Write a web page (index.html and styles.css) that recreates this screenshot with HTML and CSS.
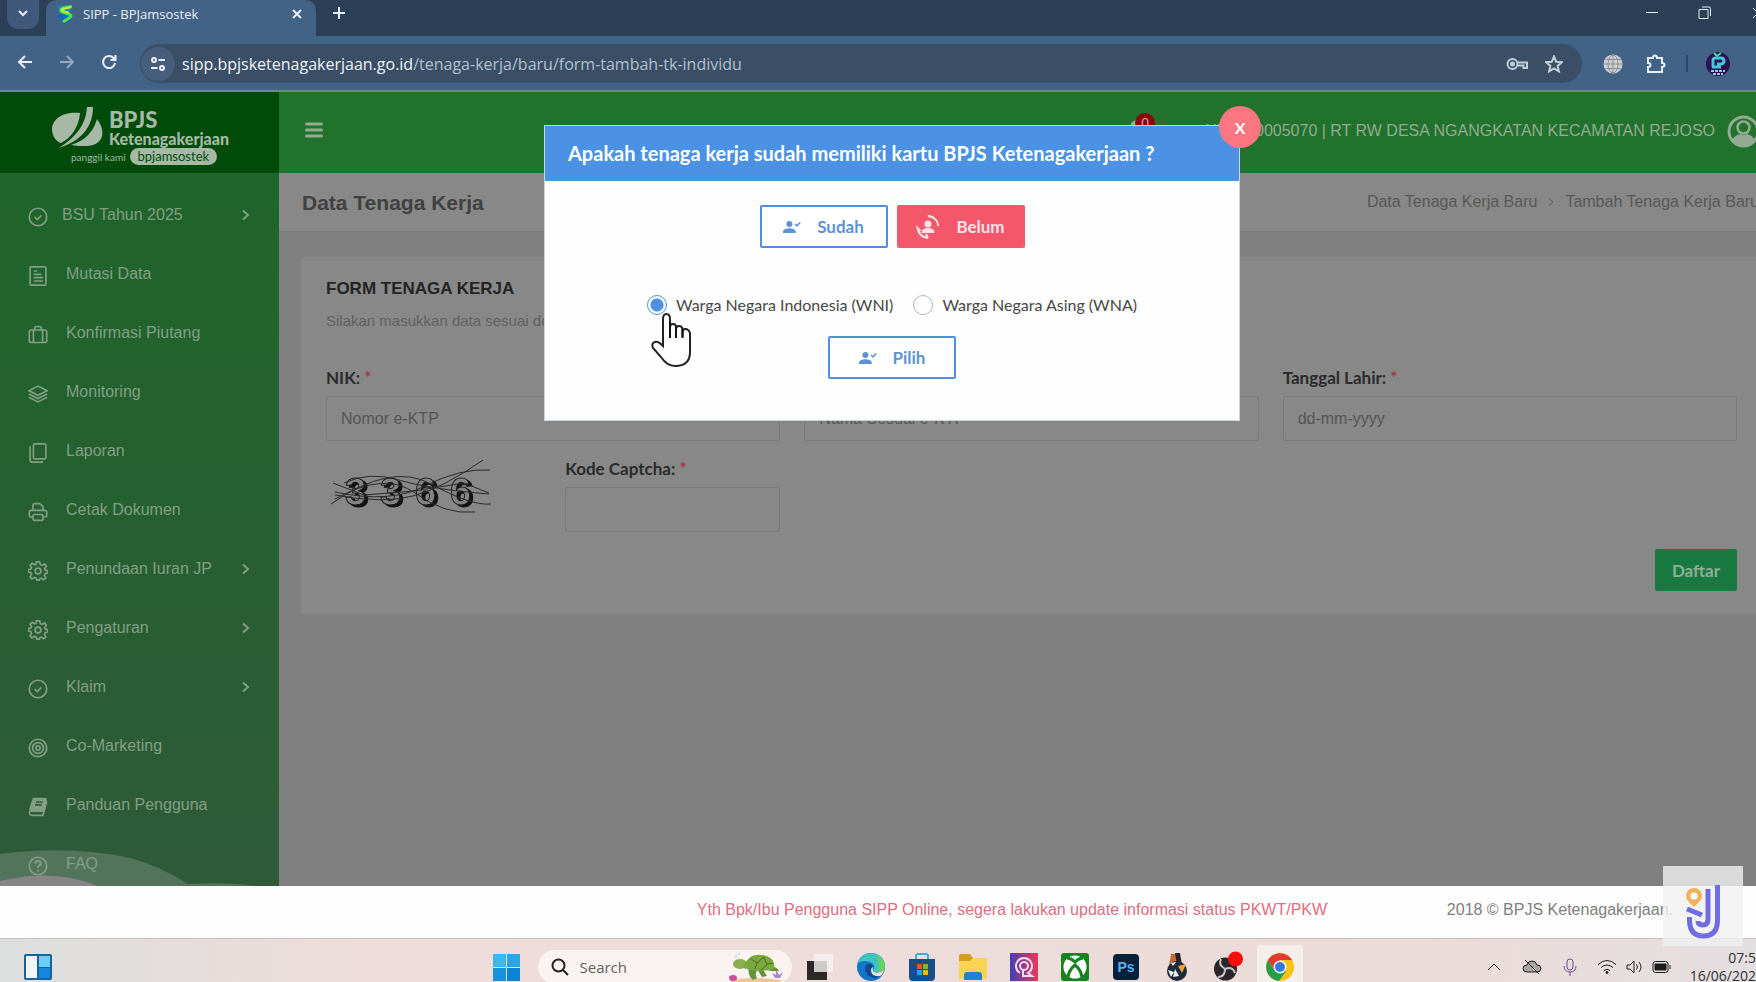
FILE: index.html
```
<!DOCTYPE html>
<html lang="id">
<head>
    <meta charset="UTF-8">
    <meta name="viewport" content="width=device-width, initial-scale=1.0">
    <title>SIPP - BPJamsostek</title>
    <link rel="stylesheet" href="styles.css">
</head>
<body>

<!-- shared icons -->
<svg class="defs" width="0" height="0">
    <symbol id="check-circle" viewBox="0 0 24 24"><circle cx="12" cy="12" r="10.5"/><path d="M8 12l3 3 5-5"/></symbol>
    <symbol id="gear" viewBox="0 0 24 24"><circle cx="12" cy="12" r="3.5"/><path d="M10 1h4l.8 3.500 2 .8L20 3.500 22 6l-2 3 .8 2 2.700.5v3l-3 .8-.8 2 1.800 3-2.500 2.200-3-1.800-2 .8L13.500 23h-3L9.700 20.500l-2-.8-3 1.800L2.500 19l1.800-3-.8-2L.5 13.300v-3L3.500 9.700l.8-2L2.500 5 5 2.700l3 1.800 1.500-.7z"/></symbol>
    <symbol id="chevron" viewBox="0 0 8 12"><path d="M1.500 1.500L6.500 6l-5 4.500"/></symbol>
    <symbol id="user-check" viewBox="0 0 24 18"><circle cx="8.500" cy="5" r="4" fill="currentColor"/><path d="M0 17v-2c0-3 5-4.500 8.500-4.500S17 12 17 15v2z" fill="currentColor"/><path d="M16 5l2.500 2.500L23 3" fill="none" stroke="currentColor" stroke-width="2"/></symbol>
</svg>

<div class="screen">

    <div class="tabstrip">
        <button class="tab-search" aria-label="Cari tab"><svg width="12" height="12" viewBox="0 0 12 12"><path d="M2 4l4 4 4-4"/></svg></button>
        <div class="tab">
            <svg class="favicon" width="18" height="18" viewBox="0 0 18 18"><path d="M2 1l9-1 5 3-5 6-8-2z" fill="#1684d8" stroke="none"/><path d="M1 11l8-3 7 2-1 6-9 1z" fill="#1368bd" stroke="none"/><path d="M16 1.500L7 3Q3 5 6 7l7 2q4 2 0 4l-6 4" fill="none" stroke="#4ee04a" stroke-width="3"/><path d="M15 2L7 4q-2 1 0 2l6 2" fill="none" stroke="#c3ee35"/></svg>
            <span class="tab-title">SIPP - BPJamsostek</span>
            <button class="tab-close" aria-label="Tutup tab"><svg width="10" height="10" viewBox="0 0 10 10"><path d="M1 1l8 8M9 1L1 9"/></svg></button>
        </div>
        <button class="new-tab" aria-label="Tab baru"><svg width="12" height="12" viewBox="0 0 12 12"><path d="M6 0v12M0 6h12"/></svg></button>
        <div class="window-buttons">
            <button aria-label="Minimize"><svg width="12" height="12" viewBox="0 0 12 12"><path d="M0 5.500h12"/></svg></button>
            <button aria-label="Restore"><svg width="14" height="14" viewBox="0 0 14 14"><path d="M1 3.500h9v9H1zM4 1h7q1.500 0 1.500 1.500V10"/></svg></button>
            <button aria-label="Close"><svg width="12" height="12" viewBox="0 0 12 12"><path d="M1 1l10 10M11 1L1 11"/></svg></button>
        </div>
    </div>

    <div class="toolbar">
        <button aria-label="Kembali"><svg width="16" height="16" viewBox="0 0 16 16"><path d="M15 8H2M8 2L2 8l6 6"/></svg></button>
        <button class="dim" aria-label="Maju"><svg width="16" height="16" viewBox="0 0 16 16"><path d="M1 8h13M8 2l6 6-6 6"/></svg></button>
        <button aria-label="Muat ulang"><svg width="16" height="16" viewBox="0 0 16 16"><path d="M14 9a6 6 0 1 1-1.500-5L14.500 6M14.500 1v5h-5"/></svg></button>
        <div class="address">
            <span class="site-info"><svg width="16" height="16" viewBox="0 0 16 16"><circle cx="4" cy="4" r="2"/><path d="M8.500 4H15M1 12h6.500"/><circle cx="12" cy="12" r="2"/></svg></span>
            <span class="url"><b>sipp.bpjsketenagakerjaan.go.id</b>/tenaga-kerja/baru/form-tambah-tk-individu</span>
            <svg class="key" width="22" height="14" viewBox="0 0 22 14"><circle cx="6.500" cy="7" r="5"/><circle cx="6.500" cy="7" r="1.500" fill="#c3cedb"/><path d="M11.500 5.500H21V11h-3.500V8.500H11.500"/></svg>
            <svg class="star" width="18" height="18" viewBox="0 0 18 18"><path d="M9 1.500l2.200 5.200 5.600.5-4.200 3.700 1.300 5.500L9 13.500l-4.900 2.900 1.300-5.500L1.200 7.200l5.600-.5z"/></svg>
        </div>
        <svg class="globe" width="20" height="20" viewBox="0 0 20 20"><circle cx="10" cy="10" r="9.500" fill="#cfd0d2" stroke="none"/><path d="M1 10h18M2.500 5.500h15M2.500 14.500h15M10 1v18" stroke="#878b92"/><ellipse cx="10" cy="10" rx="5" ry="9" stroke="#878b92"/></svg>
        <svg class="puzzle" width="20" height="20" viewBox="0 0 20 20"><path d="M2 4h5q0-2.500 2-2.500T11 4h5v5q2.500 0 2.500 2T16 13v5H2v-5q2.500 0 2.500-2T2 9z"/></svg>
        <span class="divider"></span>
        <svg class="avatar" width="24" height="24" viewBox="0 0 24 24"><circle cx="12" cy="12" r="12" fill="#2b1152" stroke="none"/><path d="M7 15V8q0-2 3-2h5q3 0 3 3t-4 3h-3M6 15h9" stroke="#45c6dc" stroke-width="3"/><path d="M8 1l3 3 4-3" stroke="#3fdc9c" stroke-width="2"/><path d="M5 19h14M7 22h10" stroke="#8ec4e6" stroke-width="2" stroke-dasharray="3 1"/></svg>
    </div>

    <div class="page">
        <div class="app">
            <aside class="sidebar">
                <div class="brand">
                    <div class="brand-main">
                        <svg width="52" height="41" viewBox="0 0 52 41"><path d="M29 6C14 4 1 11 1 22c0 8 5 13 9 14C20 31 28 20 29 6z"/><path d="M36 0h6c0 20-12 34-34 41 18-12 27-24 28-41z"/><path d="M46 12c10 13 6 27-11 27-5 0-10 0-15-1 13-4 22-12 26-26z"/></svg>
                        <div>
                            <div class="brand-name">BPJS</div>
                            <div class="brand-sub">Ketenagakerjaan</div>
                        </div>
                    </div>
                    <div class="brand-tag"><span>panggil kami</span> <b>bpjamsostek</b></div>
                </div>
                <nav class="menu">
                    <a href="#" class="first"><svg class="ico"><use href="#check-circle"/></svg><span>BSU Tahun 2025</span><svg class="arrow"><use href="#chevron"/></svg></a>
                    <a href="#"><svg class="ico" viewBox="0 0 24 24"><rect x="2.500" y="1" width="19" height="22" rx="1"/><path d="M7 6h4M7 10h9M7 14h11M7 18h11"/></svg><span>Mutasi Data</span></a>
                    <a href="#"><svg class="ico" viewBox="0 0 24 24"><rect x="1.500" y="6" width="21" height="15" rx="2.500"/><path d="M8 6V4q0-2 2-2h4q2 0 2 2v2M6.500 6v15M17.500 6v15"/></svg><span>Konfirmasi Piutang</span></a>
                    <a href="#"><svg class="ico" viewBox="0 0 24 24"><path d="M12 2.500l11 5.500-11 5.500L1 8zM1 12l11 5.500L23 12M1 16l11 5.500L23 16"/></svg><span>Monitoring</span></a>
                    <a href="#"><svg class="ico" viewBox="0 0 24 24"><rect x="6.500" y="1" width="15" height="18" rx="2"/><path d="M2.500 4v16q0 3 3 3H18"/></svg><span>Laporan</span></a>
                    <a href="#"><svg class="ico" viewBox="0 0 24 24"><path d="M6 10V4q0-2 2-2h6l4 3.500V10M6 18H3.500q-2 0-2-2v-3.500q0-2.500 2.500-2.500h16q2.500 0 2.500 2.500V16q0 2-2 2H18"/><rect x="6" y="15" width="12" height="7" rx="2"/></svg><span>Cetak Dokumen</span></a>
                    <a href="#"><svg class="ico"><use href="#gear"/></svg><span>Penundaan Iuran JP</span><svg class="arrow"><use href="#chevron"/></svg></a>
                    <a href="#"><svg class="ico"><use href="#gear"/></svg><span>Pengaturan</span><svg class="arrow"><use href="#chevron"/></svg></a>
                    <a href="#"><svg class="ico"><use href="#check-circle"/></svg><span>Klaim</span><svg class="arrow"><use href="#chevron"/></svg></a>
                    <a href="#"><svg class="ico" viewBox="0 0 24 24"><circle cx="12" cy="12" r="10.500"/><circle cx="12" cy="12" r="6.500"/><circle cx="12" cy="12" r="2.500"/></svg><span>Co-Marketing</span></a>
                    <a href="#"><svg class="ico" viewBox="0 0 24 24"><path d="M6.500 2H20q2 0 1.500 2l-3 13H5q-3 0-2.500-3z" fill="currentColor"/><path d="M2 17q-1 5 3 5h13l4.500-17"/><path d="M9.500 6h8M8.500 9.500h8" stroke="#2e5b38"/></svg><span>Panduan Pengguna</span></a>
                    <a href="#"><svg class="ico" viewBox="0 0 24 24"><circle cx="12" cy="12" r="10.500"/><path d="M8.500 9q.5-3 3.500-3t3.500 3q0 1.500-2 2.500T12 14M12 16.500v2" stroke-width="2.500"/></svg><span>FAQ</span></a>
                </nav>
                <svg class="wave" viewBox="0 0 279 36" preserveAspectRatio="none"><path d="M0 4Q70-5 130 8q30 8 58 26 40-2 66 2H0z" fill="#52745a"/><path d="M0 31Q40 21 75 29q14 3 22 7H0z" fill="#858585"/></svg>
            </aside>

            <div class="main">
                <header class="topbar">
                    <button class="burger" aria-label="Menu"><svg width="18" height="16" viewBox="0 0 18 16"><path d="M1.500 2h15M1.500 8h15M1.500 14h15"/></svg></button>
                    <div class="account">
                        <span class="bell">
                            <svg width="22" height="22" viewBox="0 0 22 22"><path d="M3 17V9q1-7 8-7t8 7v8z" fill="currentColor"/></svg>
                            <span class="badge">0</span>
                        </span>
                        <span>NR0000005070 | RT RW DESA NGANGKATAN KECAMATAN REJOSO</span>
                        <svg width="33" height="33" viewBox="0 0 33 33"><circle cx="16.500" cy="16.500" r="14.500" fill="none" stroke="currentColor" stroke-width="3"/><circle cx="16.500" cy="12.500" r="6" fill="none" stroke="currentColor" stroke-width="2.500"/><path d="M5 25q3-5 8-6 3.500 2 7 0 5 1 8 6-5 6-11.500 6T5 25z" fill="currentColor"/></svg>
                    </div>
                </header>

                <div class="page-title">
                    <h1>Data Tenaga Kerja</h1>
                    <div class="breadcrumb"><a href="#">Data Tenaga Kerja Baru</a><svg width="8" height="10" viewBox="0 0 8 12"><path d="M1.500 1.500L6.500 6l-5 4.500"/></svg><a href="#">Tambah Tenaga Kerja Baru</a></div>
                </div>

                <form class="card">
                    <h2>FORM TENAGA KERJA</h2>
                    <p>Silakan masukkan data sesuai dengan e-KTP</p>
                    <div class="fields">
                        <div class="field wide"><label for="nik">NIK: <i>*</i></label><input id="nik" type="text" placeholder="Nomor e-KTP"></div>
                        <div class="field wide"><label for="nama">Nama Lengkap: <i>*</i></label><input id="nama" type="text" placeholder="Nama Sesuai e-KTP"></div>
                        <div class="field wide"><label for="lahir">Tanggal Lahir: <i>*</i></label><input id="lahir" type="text" placeholder="dd-mm-yyyy"></div>
                        <svg class="captcha" width="168" height="56" viewBox="0 0 168 56">
                            <text x="19" y="46">3</text><text x="54" y="46">3</text><text x="89" y="46">6</text><text x="124" y="46">6</text>
                            <path d="M7 24l31 12 50-4 50-8 25 10M9 33q55 12 90-6t65-16M5 45q60-42 100-20t60 20M9 40q50-28 80-6t60 19M157 1q-40 28-70 36T9 36M163 35q-60-5-90-14t-55 3"/>
                        </svg>
                        <div class="field"><label for="kode">Kode Captcha: <i>*</i></label><input id="kode" type="text"></div>
                    </div>
                    <button class="submit" type="button">Daftar</button>
                </form>
            </div>
        </div>

        <footer class="footer">
            <div class="marquee">Yth Bpk/Ibu Pengguna SIPP Online, segera lakukan update informasi status PKWT/PKWTT</div>
            <div class="copyright">2018 © BPJS Ketenagakerjaan.</div>
        </footer>

        <div class="overlay">
            <div class="modal" role="dialog" aria-labelledby="modal-title">
                <h3 id="modal-title">Apakah tenaga kerja sudah memiliki kartu BPJS Ketenagakerjaan ?</h3>
                <button class="modal-close" aria-label="Tutup">X</button>
                <div class="modal-body">
                    <div class="choices">
                        <button class="btn"><svg width="18" height="14"><use href="#user-check"/></svg>Sudah</button>
                        <button class="btn btn-red"><svg width="24" height="24" viewBox="0 0 24 24"><circle cx="12" cy="9" r="3.500" fill="currentColor"/><path d="M5.500 18q0-5 6.500-5t6.500 5z" fill="currentColor"/><path d="M12 1q9 1 10.500 10M12 1l3-1M12 23q-9-1-10.500-10l3 3M12 23l-2-4" fill="none" stroke="currentColor" stroke-width="2"/></svg>Belum</button>
                    </div>
                    <div class="radios">
                        <input type="radio" name="warga" id="wni" checked><label for="wni">Warga Negara Indonesia (WNI)</label>
                        <input type="radio" name="warga" id="wna"><label for="wna">Warga Negara Asing (WNA)</label>
                    </div>
                    <button class="btn"><svg width="18" height="14"><use href="#user-check"/></svg>Pilih</button>
                </div>
                <svg class="pointer" width="42" height="56" viewBox="0 0 42 56"><path d="M12 33V6q0-5 3.500-5T19 6v17-9q0-3 3-3t3 3v9-7q0-3 3-3t3.500 3v8-5q0-3 3-3t4.500 4v19q0 14-15 14-8 0-14-9L2 35q-2-5 2-6 3-1 8 4z" fill="#fff" stroke="#222" stroke-width="2"/><path d="M19 9v16M25 14v11M31.500 16v9" stroke="#111" stroke-width="2"/></svg>
            </div>
        </div>
    </div>

    <div class="watermark">
        <svg width="80" height="80" viewBox="0 0 80 80"><path d="M31 22a8 8 0 0 1 8 8c0 4-4 7-8 11-4-4-8-7-8-11a8 8 0 0 1 8-8z" fill="#f3b15c"/><circle cx="31" cy="30" r="3.500" fill="#fff"/><g fill="none" stroke="#6f6ce4" stroke-width="5"><path d="M24 43l15 6"/><path d="M26.500 51v3q0 16 14 16t14-16V19"/><path d="M45 23v30q0 6-5 6t-5-4"/></g></svg>
    </div>

    <div class="taskbar">
        <div class="widgets"><svg width="28" height="26" viewBox="0 0 28 26"><rect width="28" height="26" rx="2" fill="#17619d"/><path d="M2 2h11v22H2z" fill="#f1f4f9"/><path d="M15 2h11v11H15z" fill="#69d0f8"/><path d="M15 14h11v10H15z" fill="#1487dc"/></svg></div>
        <div class="apps">
            <span class="slot"><svg width="28" height="28" viewBox="0 0 28 28"><path d="M0 1h13v13H0z" fill="#3cb9ea"/><path d="M14 1h13v13H14z" fill="#2da5e4"/><path d="M0 15h13v13H0z" fill="#1891dc"/><path d="M14 15h13v13H14z" fill="#0c84d6"/></svg></span>
            <label class="search">
                <svg width="18" height="18" viewBox="0 0 18 18"><circle cx="7.500" cy="7.500" r="6"/><path d="M12 12l5 5"/></svg>
                <input type="text" placeholder="Search">
                <svg class="turtle" width="56" height="30" viewBox="0 0 56 30"><path d="M2 28q22-4 50 0v2H2z" fill="#efc694"/><ellipse cx="4" cy="26" rx="4" ry="3" fill="#cc4f97"/><path d="M46 26l-3-5 4 2 0-5 3 5 4-3-3 6z" fill="#ad84c8"/><ellipse cx="11" cy="12" rx="7" ry="5" fill="#8bb052"/><path d="M20 15q-2 8 4 13l4-2q-3-5 1-9zM38 14q10 0 12 5-8 1-14-2zM33 16l5 8-5 1-5-8z" fill="#63923d"/><path d="M14 16Q19 1 33 3t12 14q-16 4-31-1z" fill="#7aa83a"/><path d="M22 7l6 4 7-6M28 11l-2 6M35 5l3 8-6 5M38 12l6-1" fill="none" stroke="#456f29"/><path d="M7 3v3M10 1v2" stroke="#7fd0ef"/></svg>
            </label>
            <span class="slot"><svg width="28" height="28" viewBox="0 0 28 28"><path d="M1 8h20v19H1z" fill="#2b2827"/><path d="M8 1h19v18H8z" fill="#f5f4f2" opacity=".8"/></svg></span>
            <span class="slot"><svg width="28" height="28" viewBox="0 0 28 28"><circle cx="14" cy="14" r="14" fill="#1475c8"/><path d="M1 10Q4 0 14 0q13 1 14 13 0 7-7 7-5 0-5-3 3-4-1-7Q8 6 1 10z" fill="#3fc2c2"/><path d="M20 2q8 4 8 11 0 7-7 7 2-9-1-18z" fill="#67d061"/><path d="M9 12q-3 8 5 12 6 2 10-1-5 1-8-3t0-7q-3-4-7-1z" fill="#0d4a91"/><path d="M16 14q-2 5 4 6 4 0 7-3-1 5-4 6-9 1-9-6 0-2 2-3z" fill="#f0e1df"/></svg></span>
            <span class="slot"><svg width="28" height="28" viewBox="0 0 28 28"><path d="M8 6V3q0-2 2-2h8q2 0 2 2v3" fill="none" stroke="#36b0e5" stroke-width="2"/><path d="M1 6h26v18q0 4-4 4H5q-4 0-4-4z" fill="#184d86"/><path d="M9 11h5v5H9z" fill="#f05226"/><path d="M15 11h5v5h-5z" fill="#7eb928"/><path d="M9 17h5v5H9z" fill="#23a5ec"/><path d="M15 17h5v5h-5z" fill="#fab81b"/></svg></span>
            <span class="slot"><svg width="28" height="28" viewBox="0 0 28 28"><path d="M0 3q0-2 2-2h9l3 4v6H0z" fill="#d79c20"/><path d="M0 8h11l3-3h14v21H0z" fill="#fbd352"/><path d="M5 27v-5q0-3 3-3h12q3 0 3 3v5z" fill="#2184c9"/></svg></span>
            <span class="slot"><svg width="28" height="28" viewBox="0 0 28 28"><defs><linearGradient id="g1"><stop stop-color="#453fb5"/><stop offset="1" stop-color="#ed3757"/></linearGradient></defs><path d="M0 0h28v28H0z" fill="url(#g1)"/><path d="M10 20a8 8 0 1 1 8 0l4 3h-9v-6" fill="none" stroke="#f7dcec" stroke-width="2"/><circle cx="14" cy="13" r="4" fill="none" stroke="#f7dcec" stroke-width="2"/></svg></span>
            <span class="slot"><svg width="28" height="28" viewBox="0 0 28 28"><rect width="28" height="28" rx="3" fill="#17831f"/><circle cx="14" cy="14" r="11.500" fill="#fff"/><path d="M6 5q4 0 8 4 4-4 8-4M7 24q1-7 7-12 6 5 7 12" fill="none" stroke="#17831f" stroke-width="3"/></svg></span>
            <span class="slot"><span class="ps">Ps</span></span>
            <span class="slot"><svg width="22" height="28" viewBox="0 0 22 28"><path d="M5 1h8l3 13H3z" fill="#c86b3b"/><path d="M9 0h5l2 12h-5z" fill="#282426"/><circle cx="11" cy="18" r="10" fill="#1f2b3d"/><path d="M2 17l6 2-3 5zM9 16l4 7-6 1zM5 10l5-1-3 4z" fill="#eef2f5"/><path d="M12 13l8-2-4 9z" fill="#e7a934"/></svg></span>
            <span class="slot"><svg width="30" height="32" viewBox="0 0 30 32"><circle cx="12.500" cy="18" r="11.500" fill="#292729"/><path d="M12 18Q5 14 8 8M12 18q0 8-7 8M12 18q8-3 10 4" fill="none" stroke="#c9c5c7" stroke-width="2"/><circle cx="22.500" cy="8" r="7.500" fill="#fb0d0d"/></svg></span>
            <span class="slot active"><svg width="28" height="28" viewBox="0 0 28 28"><circle cx="14" cy="14" r="14" fill="#fbc116"/><path d="M2 7a14 14 0 0 1 24 0H14l-6 10z" fill="#e33b2e"/><path d="M2 7a14 14 0 0 0 11 21l7-10-12-1z" fill="#249e4b"/><circle cx="14" cy="14" r="6.500" fill="#fff"/><circle cx="14" cy="14" r="5" fill="#3378e3"/></svg></span>
        </div>
        <div class="tray">
            <svg class="spaced" width="14" height="14" viewBox="0 0 14 14"><path d="M1 10l6-6 6 6"/></svg>
            <svg class="spaced" width="20" height="16" viewBox="0 0 20 16"><path d="M5 13q-4 0-4-3.500T5 6q1-4 5-4t5 4q4 0 4 3.500T15 13z" fill="#a9a5a5"/><path d="M3 1l14 14"/></svg>
            <svg class="spaced mic" width="14" height="18" viewBox="0 0 14 18"><rect x="4" y="1" width="6" height="11" rx="3"/><path d="M1 8q0 6 6 6t6-6M7 14v4"/></svg>
            <svg width="18" height="16" viewBox="0 0 18 16"><path d="M0 5.500q9-8 18 0M3 8.500q6-5 12 0M6 11.500q3-2.500 6 0"/><circle cx="9" cy="13.500" r="1" fill="#1d1d1d"/></svg>
            <svg width="16" height="16" viewBox="0 0 16 16"><path d="M1 6h3l4-4v12l-4-4H1zM10.500 5.500q2 2.500 0 5M13 3q4 5 0 10"/></svg>
            <svg width="20" height="14" viewBox="0 0 20 14"><rect x="1" y="1.500" width="15" height="11" rx="2.500"/><path d="M3 4h11v6H3z" fill="#1d1d1d"/><path d="M18 5v4"/></svg>
            <div class="clock">07:57<br>16/06/2025</div>
        </div>
    </div>
</div>

</body>
</html>
```
FILE: styles.css
```
* {
    box-sizing: border-box;
}

body {
    margin: 0;
    overflow: hidden;
    font-family: 'Liberation Sans', Arial, sans-serif;
    font-size: 16px;
}

button {
    border: none;
    padding: 0;
    background: none;
    cursor: pointer;
}

a {
    color: inherit;
    text-decoration: none;
}

.defs {
    position: absolute;
}

/* the desktop runs a little past the right and bottom edge */
.screen {
    position: relative;
    display: flex;
    flex-direction: column;
    width: calc(100% + 28px);
    height: calc(100vh + 12px);
}

/* browser */
.tabstrip {
    display: flex;
    height: 36px;
    padding-left: 7px;
    background-color: #2b3f57;
}

.tabstrip svg,
.toolbar svg {
    fill: none;
    stroke: #e9eff6;
    stroke-width: 2;
}

.tab-search {
    width: 32px;
    height: 29px;
    margin-right: 7px;
    border-radius: 0 0 11px 11px;
    background-color: #40597a;
}

.tab {
    display: flex;
    align-items: center;
    width: 270px;
    padding: 0 14px 8px 10px;
    border-radius: 10px 10px 0 0;
    background-color: #426286;
}

.tab-title {
    flex: 1;
    margin-left: 9px;
    font-family: 'Open Sans', 'Noto Sans', sans-serif;
    font-size: 13px;
    color: #e9eff6;
}

.new-tab {
    width: 46px;
    padding-bottom: 8px;
}

.window-buttons {
    display: flex;
    margin-left: auto;
}

.window-buttons button {
    width: 53px;
    padding-bottom: 8px;
}

.tabstrip .window-buttons svg {
    stroke-width: 1;
}

.toolbar {
    display: flex;
    align-items: center;
    height: 56px;
    padding: 1px 54px 0 4px;
    border-bottom: 2px solid #6b899c;
    background-color: #426286;
}

.toolbar > button {
    width: 42px;
    height: 32px;
}

.toolbar .dim {
    opacity: 0.5;
}

.address {
    display: flex;
    flex: 1;
    align-items: center;
    height: 39px;
    margin: 0 21px 0 10px;
    padding-right: 19px;
    border-radius: 20px;
    background-color: #3a4e66;
}

.site-info {
    display: flex;
    align-items: center;
    justify-content: center;
    width: 34px;
    height: 34px;
    margin: 0 7px 0 1px;
    border-radius: 17px;
    background-color: #465d7c;
}

.url {
    flex: 1;
    font-family: 'Open Sans', 'Noto Sans', sans-serif;
    font-size: 16px;
    color: #b3c0d0;
}

.url b {
    font-weight: normal;
    color: #f0f4f8;
}

.toolbar .key,
.toolbar .star {
    stroke: #c3cedb;
}

.toolbar .star {
    margin-left: 17px;
}

.toolbar .globe {
    stroke-width: 1;
}

.puzzle {
    margin-left: 23px;
}

.divider {
    width: 2px;
    height: 17px;
    margin: 0 18px 0 20px;
    background-color: #234a78;
}

/* web page */
.page {
    position: relative;
    display: flex;
    flex: 1;
    flex-direction: column;
    min-height: 0;
}

.app {
    display: flex;
    flex: 1;
    min-height: 0;
    background-color: #808080;
}

.sidebar {
    position: relative;
    width: 279px;
    overflow: hidden;
    background: linear-gradient(#1e662b, #24612f 45%, #2f5a38);
}

.brand {
    height: 81px;
    padding: 15px 0 0 51px;
    background-color: #004b09;
    color: #a5b9a6;
    font-family: Lato, sans-serif;
}

.brand-main {
    display: flex;
    gap: 6px;
}

.brand-main svg {
    fill: #a5b9a6;
}

.brand-name {
    font-size: 22px;
    font-weight: 900;
    line-height: 26px;
}

.brand-sub {
    font-size: 16px;
    font-weight: 900;
    line-height: 12px;
}

.brand-tag {
    display: flex;
    align-items: center;
    gap: 4px;
    padding-left: 20px;
    font-size: 10px;
}

.brand-tag b {
    padding: 0 8px;
    border-radius: 9px;
    background-color: #a5b9a6;
    color: #004b09;
    font-size: 13px;
    font-weight: normal;
    line-height: 17px;
}

.menu {
    position: relative;
    z-index: 1;
    padding-top: 12px;
}

.menu a {
    display: flex;
    align-items: center;
    height: 59px;
    padding: 0 29px 0 28px;
    color: #829f83;
}

.menu a span {
    flex: 1;
    margin-left: 18px;
}

.menu .first span {
    margin-left: 14px;
}

.menu svg,
.breadcrumb svg {
    fill: none;
    stroke: currentColor;
    stroke-width: 2;
}

.ico {
    width: 20px;
    height: 20px;
    margin-top: 4px;
}

.arrow {
    width: 9px;
    height: 12px;
}

.wave {
    position: absolute;
    bottom: 0;
    left: 0;
    width: 100%;
    height: 36px;
}

.main {
    flex: 1;
}

.topbar {
    display: flex;
    align-items: center;
    justify-content: space-between;
    height: 81px;
    padding: 0 24px 3px 26px;
    background-color: #21722d;
    color: #94ab93;
}

.burger svg {
    stroke: #94ab93;
    stroke-width: 3;
    stroke-linecap: round;
}

.account {
    display: flex;
    align-items: center;
    gap: 12px;
}

.bell {
    position: relative;
    margin-right: 44px;
}

.badge {
    position: absolute;
    top: -5px;
    right: -6px;
    width: 20px;
    border-radius: 10px;
    background-color: #8d0505;
    color: #b9a3a3;
    font-size: 14px;
    line-height: 20px;
    text-align: center;
}

.page-title {
    display: flex;
    align-items: center;
    justify-content: space-between;
    height: 59px;
    padding: 2px 25px 0 23px;
    border-bottom: 1px solid #7a7a7a;
    background-color: #888888;
}

h1 {
    margin: 0;
    color: #414141;
    font-size: 21px;
}

.breadcrumb {
    display: flex;
    align-items: center;
    gap: 10px;
    padding-bottom: 3px;
    color: #585858;
}

.breadcrumb svg {
    stroke-width: 1;
}

.card {
    display: flex;
    flex-direction: column;
    margin: 26px 23px;
    padding: 19px 24px 22px;
    background-color: #888888;
    box-shadow: 0 0 3px #919191;
}

.card h2 {
    margin: 0;
    color: #242424;
    font-size: 17px;
    line-height: 24px;
}

.card p {
    margin: 10px 0 37px;
    color: #616161;
    font-size: 15px;
    line-height: 20px;
}

.fields {
    display: grid;
    grid-template-columns: repeat(6, minmax(0, 1fr));
    gap: 18px 24px;
}

.field {
    display: flex;
    flex-direction: column;
    gap: 8px;
}

.wide {
    grid-column: span 2;
}

.field label {
    color: #2b2b2b;
    font-family: Lato, sans-serif;
    font-size: 17px;
    font-weight: bold;
    line-height: 20px;
}

.field i {
    color: #a33545;
    font-style: normal;
}

.field input {
    height: 45px;
    padding: 0 14px;
    border: 1px solid #7a7a7a;
    border-radius: 2px;
    background: none;
    font-family: inherit;
    font-size: 16px;
}

.field input::placeholder {
    color: #555555;
    opacity: 1;
}

.captcha text {
    fill: #848484;
    stroke: #1c1c1c;
    stroke-width: 1;
    font-size: 38px;
    font-weight: bold;
    filter: drop-shadow(3px 2px 0 #111111);
}

.captcha path {
    fill: none;
    stroke: #2b2b2b;
}

.submit {
    align-self: flex-end;
    width: 82px;
    height: 42px;
    margin-top: 17px;
    border-radius: 2px;
    background-color: #187a40;
    color: #8eae95;
    font-family: Lato, sans-serif;
    font-size: 17px;
    font-weight: bold;
}

.footer {
    position: relative;
    display: flex;
    align-items: center;
    justify-content: flex-end;
    height: 52px;
    padding: 0 111px 4px 0;
    background-color: #fdfdfd;
}

.marquee {
    width: 631px;
    margin-right: 119px;
    overflow: hidden;
    color: #dd6f83;
    white-space: nowrap;
}

.copyright {
    color: #7f7f7f;
}

/* dialog */
.overlay {
    position: absolute;
    inset: 0;
    display: flex;
    align-items: flex-start;
    justify-content: center;
    padding-top: 33px;
}

.modal {
    position: relative;
    width: 696px;
    border: 1px solid #c9d4e0;
    background-color: #fefefe;
    font-family: Lato, sans-serif;
}

.modal h3 {
    margin: 0;
    padding: 0 23px;
    background-color: #4c92e4;
    color: #fff;
    font-size: 20px;
    line-height: 55px;
}

.modal-close {
    position: absolute;
    top: -20px;
    right: -22px;
    width: 42px;
    height: 42px;
    border-radius: 50%;
    background-color: #fb7680;
    color: #fff;
    font-family: inherit;
    font-size: 16px;
    font-weight: bold;
}

.modal-body {
    display: flex;
    flex-direction: column;
    align-items: center;
    padding: 24px 0 41px;
}

.choices {
    display: flex;
    gap: 9px;
}

.btn {
    display: flex;
    align-items: center;
    justify-content: center;
    gap: 16px;
    width: 128px;
    height: 43px;
    border: 2px solid #5090d8;
    border-radius: 2px;
    background-color: #fff;
    color: #5c93d6;
    font-family: inherit;
    font-size: 17px;
    font-weight: bold;
}

.btn-red {
    border-color: #f4566a;
    background-color: #f4566a;
    color: #ffe3e6;
}

.radios {
    display: flex;
    align-items: center;
    margin: 47px 0 21px;
    color: #474747;
    font-size: 16px;
}

.radios input {
    appearance: none;
    width: 20px;
    height: 20px;
    margin: 0 9px 0 0;
    border: 1px solid #b5b5b5;
    border-radius: 50%;
}

.radios input:checked {
    border-color: #4c92e4;
    background: radial-gradient(circle, #4c92e4 6px, #fff 7px);
}

.radios label {
    padding-bottom: 1px;
}

.radios label + input {
    margin-left: 20px;
}

.pointer {
    position: absolute;
    top: 187px;
    left: 106px;
}

.watermark {
    position: absolute;
    right: 41px;
    bottom: 48px;
    z-index: 2;
    width: 80px;
    height: 80px;
    background-color: rgba(240, 240, 240, 0.8);
}

/* taskbar */
.taskbar {
    display: grid;
    grid-template-columns: 1fr auto 1fr;
    align-items: center;
    height: 56px;
    border-top: 1px solid #c9bfbf;
    background: linear-gradient(90deg, #dcdfde, #eeddda 20%, #ecdcd9 80%, #e3dfe2);
}

.widgets {
    padding-left: 24px;
}

.widgets svg,
.tray svg,
.slot svg {
    display: block;
}

.apps {
    display: flex;
    align-items: center;
}

.slot {
    display: flex;
    align-items: center;
    justify-content: center;
    width: 51px;
    height: 44px;
}

.active {
    width: 46px;
    margin-left: 3px;
    border-radius: 4px;
    background-color: #f7eeec;
}

.search {
    display: flex;
    align-items: center;
    width: 254px;
    height: 34px;
    margin: 0 3px 0 5px;
    padding: 0 7px 0 13px;
    border-radius: 17px;
    background-color: #faf3f1;
}

.search > svg:first-child {
    fill: none;
    stroke: #222;
    stroke-width: 2;
}

.search input {
    flex: 1;
    min-width: 0;
    margin-left: 11px;
    padding: 0;
    border: none;
    background: none;
    font-family: 'Open Sans', 'Noto Sans', sans-serif;
    font-size: 15px;
}

.search input::placeholder {
    color: #626262;
    opacity: 1;
}

.ps {
    width: 26px;
    border-radius: 4px;
    background-color: #08213a;
    color: #55b2f6;
    font-size: 14px;
    font-weight: bold;
    line-height: 26px;
    text-align: center;
}

.tray {
    display: flex;
    align-items: center;
    justify-content: flex-end;
    gap: 10px;
    padding-right: 20px;
}

.tray svg {
    fill: none;
    stroke: #1d1d1d;
    stroke-width: 1;
}

.tray .spaced {
    margin-right: 11px;
}

.tray .mic {
    stroke: #73499a;
}

.clock {
    margin-left: 8px;
    font-family: 'Open Sans', 'Noto Sans', sans-serif;
    font-size: 14px;
    line-height: 18px;
    text-align: right;
    color: #303030;
}
```
